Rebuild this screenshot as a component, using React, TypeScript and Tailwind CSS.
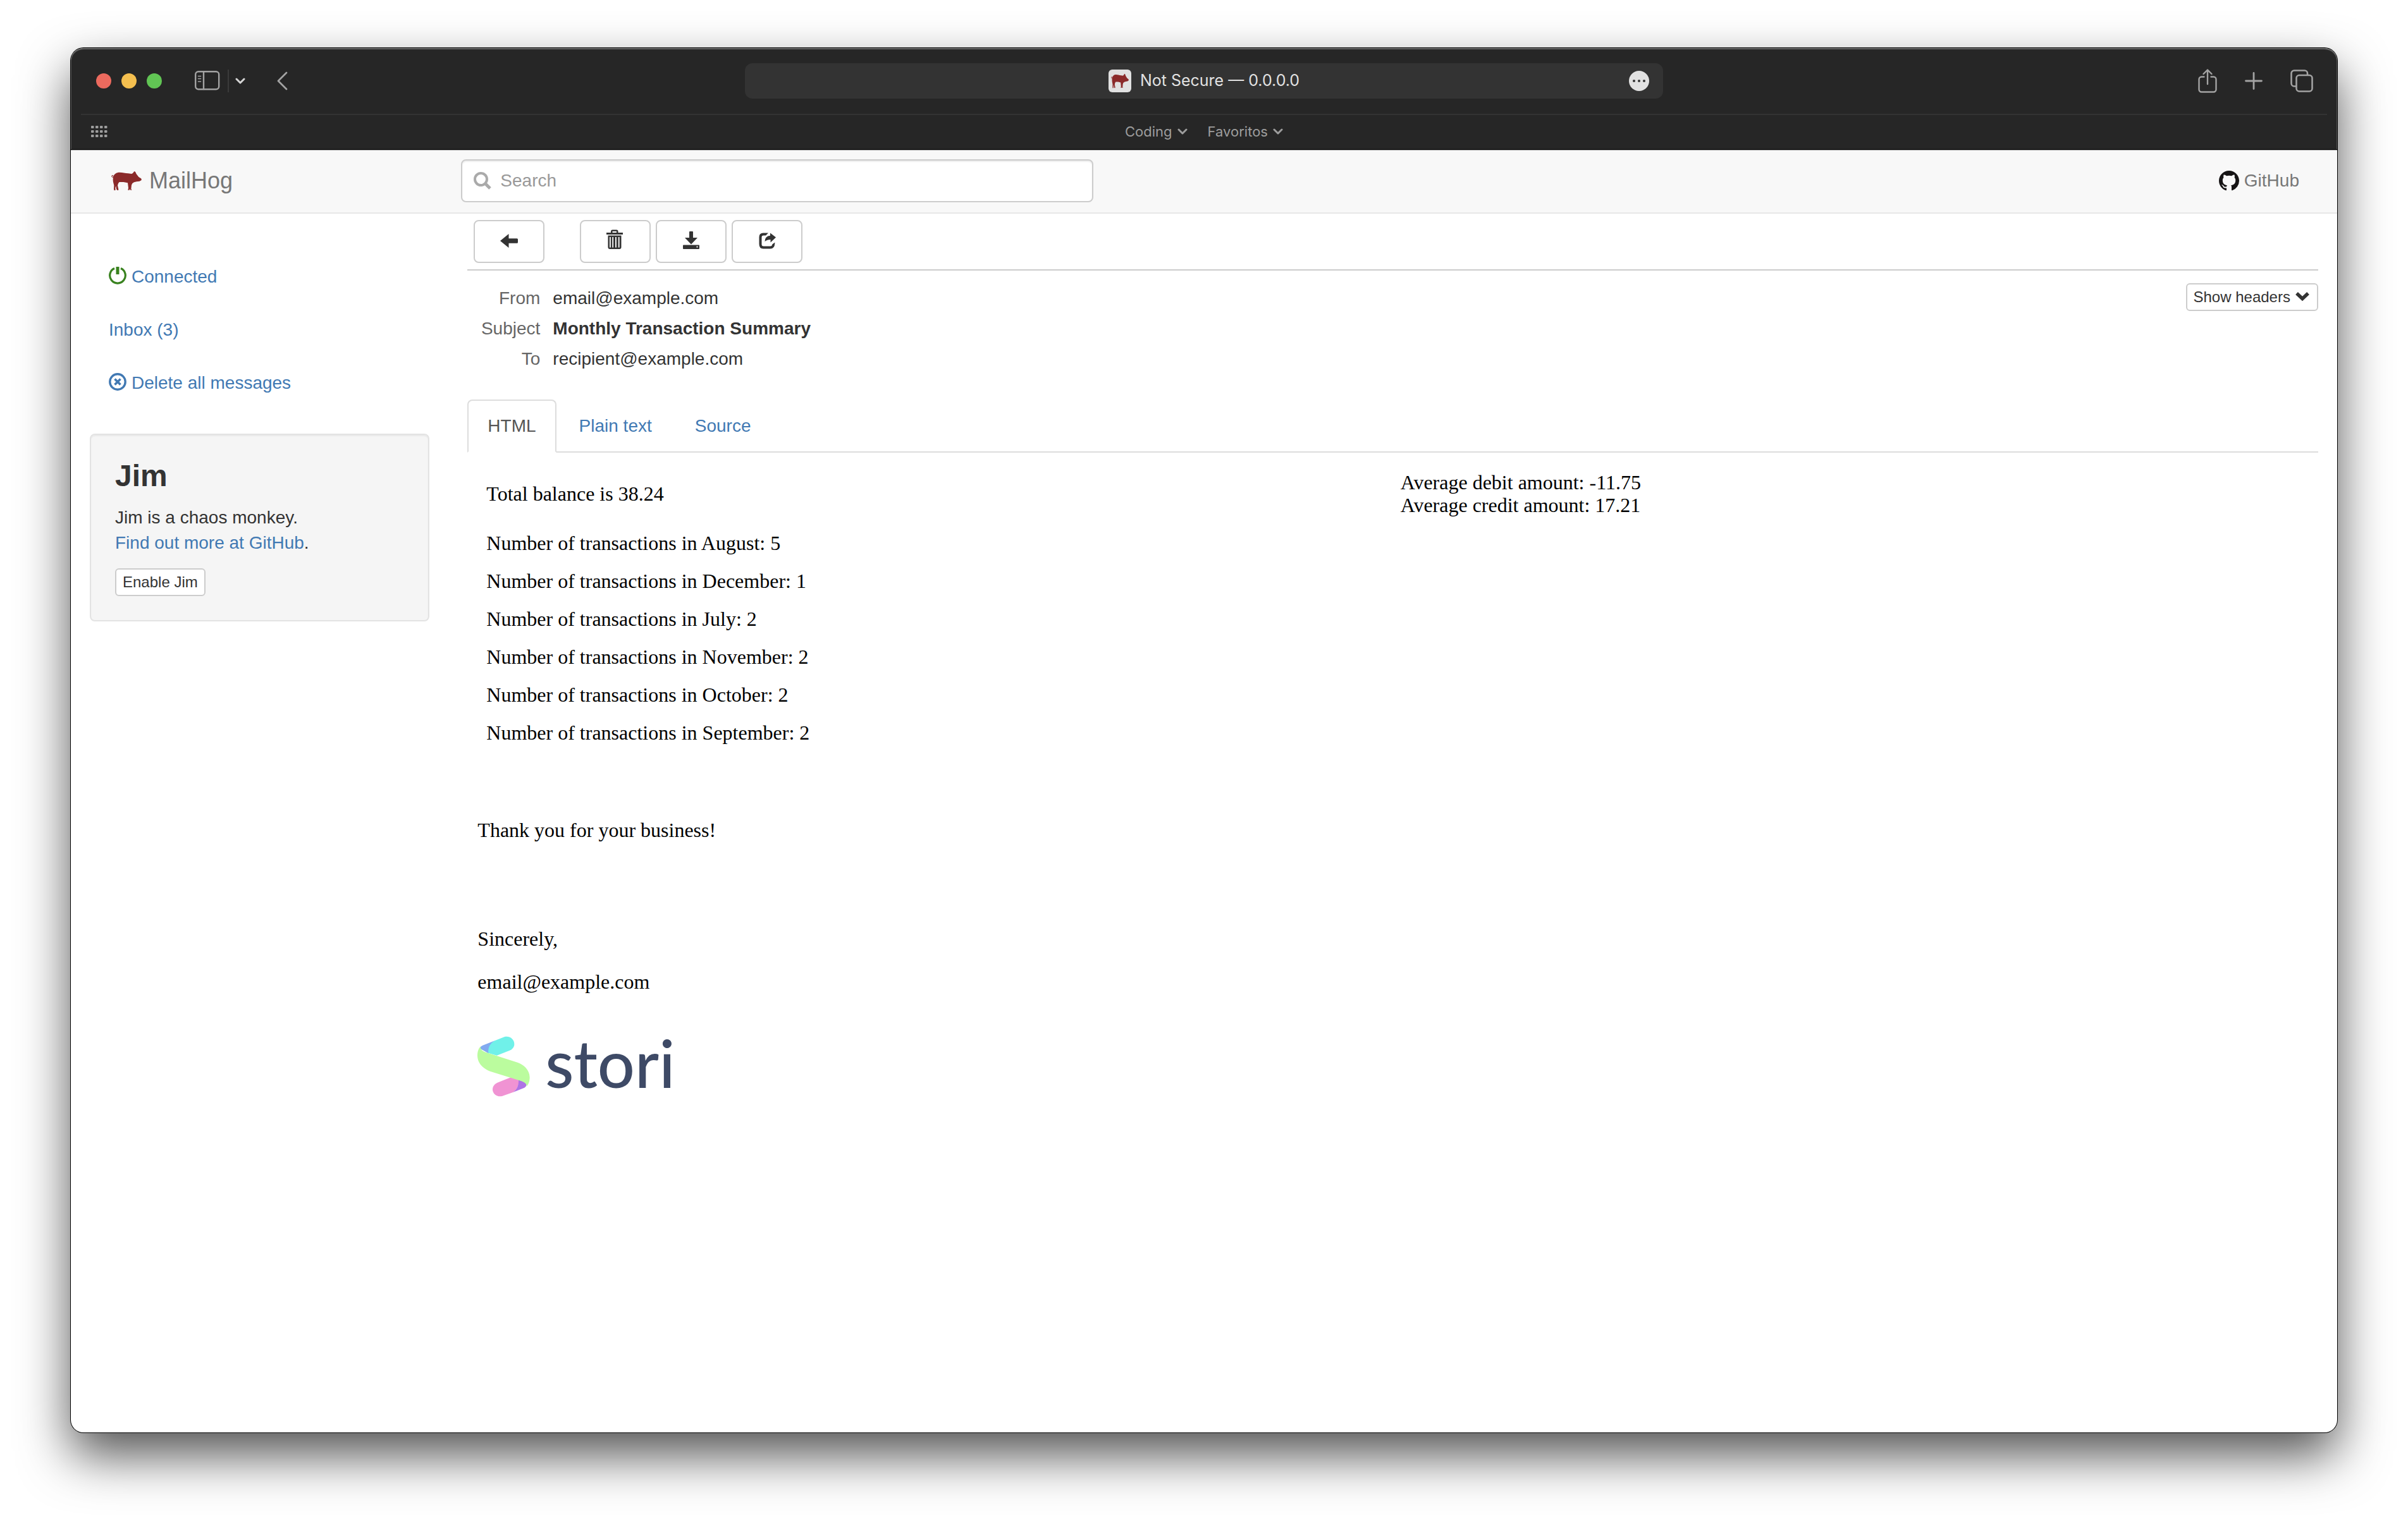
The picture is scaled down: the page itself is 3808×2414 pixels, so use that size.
import type { ReactNode } from "react";

const months = [
  ["August", 5],
  ["December", 1],
  ["July", 2],
  ["November", 2],
  ["October", 2],
  ["September", 2],
] as const;

function Pig({ className }: { className: string }) {
  return (
    <svg viewBox="18 30 144 96" preserveAspectRatio="none" className={className} fill="#8b2a2a" aria-hidden="true">
      <path d="M27 60C30 46 42 38 58 38C72 38 84 42 98 43L114 45L120 42L127 33L132 35L137 46L148 60L159 67Q163 71 160 76L152 80L138 82L126 85Q116 89 114 98L112 116L115 122L109 122L106 117L104 122H97L99 112L96 88L76 84H56Q49 90 48 100L52 118V122L46 123L42 117L40 102L37 112L38 122L32 124L30 118L31 100L27 84Q25 72 27 60Z" />
      <path d="M29 61C24 63 19 60 20 55C21 51 27 51 27 55C27 57 24 58 23 56" fill="none" stroke="#8b2a2a" strokeWidth="3" />
    </svg>
  );
}

function GitHubMark() {
  return (
    <svg viewBox="0 0 16 16" className="size-8" fill="#161415" aria-hidden="true">
      <path d="M8 0C3.58 0 0 3.58 0 8c0 3.54 2.29 6.53 5.47 7.59.4.07.55-.17.55-.38 0-.19-.01-.82-.01-1.49-2.01.37-2.53-.49-2.69-.94-.09-.23-.48-.94-.82-1.13-.28-.15-.68-.52-.01-.53.63-.01 1.08.58 1.23.82.72 1.21 1.87.87 2.33.66.07-.52.28-.87.51-1.07-1.78-.2-3.64-.89-3.64-3.95 0-.87.31-1.59.82-2.15-.08-.2-.36-1.02.08-2.12 0 0 .67-.21 2.2.82.64-.18 1.32-.27 2-.27s1.36.09 2 .27c1.53-1.04 2.2-.82 2.2-.82.44 1.1.16 1.92.08 2.12.51.56.82 1.27.82 2.15 0 3.07-1.87 3.75-3.65 3.95.29.25.54.73.54 1.48 0 1.07-.01 1.93-.01 2.2 0 .21.15.46.55.38A8.01 8.01 0 0 0 16 8c0-4.42-3.58-8-8-8Z" />
    </svg>
  );
}

function SmallChevron({ className }: { className: string }) {
  return (
    <svg viewBox="0 0 16 10" className={className} fill="none" stroke="currentColor" strokeWidth="3" strokeLinecap="round" strokeLinejoin="round" aria-hidden="true">
      <path d="M2 2l6 6 6-6" />
    </svg>
  );
}

function TitleBar() {
  return (
    <div className="grid h-26 grid-cols-[1fr_40.5%_1fr] items-center">
      <div className="flex items-center pl-10 text-[#a3a3a3]">
        <div className="flex gap-4">
          <button aria-label="Close" className="size-6 rounded-full bg-[#ec6a5e]" />
          <button aria-label="Minimize" className="size-6 rounded-full bg-[#f4bf4f]" />
          <button aria-label="Zoom" className="size-6 rounded-full bg-[#61c554]" />
        </div>
        <button aria-label="Show sidebar" className="ml-13">
          <svg viewBox="0 0 40 32" className="h-8 w-10" fill="none" stroke="currentColor" strokeWidth="2.4" strokeLinecap="round">
            <rect x="1.2" y="1.2" width="37" height="28" rx="4.5" />
            <path d="M14 1.5v27.5" />
            <path d="M5.5 8.5h4M5.5 12.5h4M5.5 17h4" strokeWidth="1.6" />
          </svg>
        </button>
        <span className="ml-3 h-9 w-0.5 bg-[#3a3a3a]" />
        <button aria-label="Tab groups" className="ml-2.5 text-[#d6d6d6]">
          <SmallChevron className="h-2.5 w-4" />
        </button>
        <button aria-label="Back" className="ml-12">
          <svg viewBox="0 0 20 32" className="h-8 w-5" fill="none" stroke="currentColor" strokeWidth="2.8" strokeLinecap="round" strokeLinejoin="round">
            <path d="M17 3L4 16l13 13" />
          </svg>
        </button>
      </div>
      <div className="grid h-14 grid-cols-[1fr_auto_1fr] items-center rounded-xl bg-[#333333]">
        <span />
        <div className="flex items-center gap-3.5 font-[Inter,sans-serif] text-[25px] text-[#e2e2e2]">
          <span className="flex size-9 items-center justify-center rounded-md bg-[#e1e1e1]">
            <Pig className="h-6 w-7" />
          </span>
          <span>Not Secure — 0.0.0.0</span>
        </div>
        <button aria-label="Page menu" className="mr-5.5 flex size-8 items-center justify-center gap-1 justify-self-end rounded-full bg-[#e2e2e2]">
          <span className="size-1 rounded-full bg-[#333333]" />
          <span className="size-1 rounded-full bg-[#333333]" />
          <span className="size-1 rounded-full bg-[#333333]" />
        </button>
      </div>
      <div className="flex items-center justify-end gap-11 pr-9.5 text-[#a3a3a3]">
        <button aria-label="Share">
          <svg viewBox="0 0 30 38" className="h-9.5 w-7.5" fill="none" stroke="currentColor" strokeWidth="2.4" strokeLinecap="round" strokeLinejoin="round">
            <path d="M9.5 12.5H5.5a4 4 0 0 0-4 4v16a4 4 0 0 0 4 4h19a4 4 0 0 0 4-4v-16a4 4 0 0 0-4-4h-4M15 24V2M8.5 8L15 1.5 21.500 8" />
          </svg>
        </button>
        <button aria-label="New tab">
          <svg viewBox="0 0 28 28" className="size-7" fill="none" stroke="currentColor" strokeWidth="2.8" strokeLinecap="round">
            <path d="M14 1.500v25M1.500 14h25" />
          </svg>
        </button>
        <button aria-label="Show all tabs">
          <svg viewBox="0 0 36 36" className="size-9" fill="none" stroke="currentColor" strokeWidth="2.6">
            <rect x="9.500" y="9" width="25" height="25.500" rx="4.500" />
            <path d="M9 26.500H6a4.500 4.500 0 0 1-4.500-4.500V6A4.500 4.500 0 0 1 6 1.500h16.500A4.500 4.500 0 0 1 27 6v2.500" />
          </svg>
        </button>
      </div>
    </div>
  );
}

function BookmarksBar() {
  return (
    <div className="grid h-13.5 grid-cols-[1fr_auto_1fr] items-center pb-0.5 text-[22px] text-[#9d9d9d]">
      <button aria-label="Favorites grid" className="ml-8 justify-self-start">
        <svg viewBox="0 0 26 18" className="h-4.5 w-6.5" fill="currentColor">
          {[0, 7, 14].map((y) =>
            [0, 7, 14, 21].map((x) => <rect key={`${x}-${y}`} x={x} y={y} width="4.500" height="4" rx="1" />),
          )}
        </svg>
      </button>
      <div className="flex gap-8 font-[Inter,sans-serif]">
        {["Coding", "Favoritos"].map((name) => (
          <button key={name} className="flex items-center gap-2">
            {name}
            <SmallChevron className="h-2.5 w-4" />
          </button>
        ))}
      </div>
      <span />
    </div>
  );
}

function Navbar() {
  return (
    <header className="flex h-25.25 items-center border-t border-b-2 border-t-[#a8a8a8] border-b-[#e7e7e7] bg-[#f8f8f8] pb-0.5 text-[#777777]">
      <div className="w-1/6 shrink-0 pl-16">
        <a href="#" className="flex items-center gap-3 text-4xl">
          <Pig className="h-8 w-12" />
          MailHog
        </a>
      </div>
      <label className="ml-5 flex h-17 w-[27.9%] items-center gap-3.5 rounded-lg border-2 border-[#cccccc] bg-white pl-4.5 shadow-[inset_0_2px_2px_rgba(0,0,0,0.075)]">
        <svg viewBox="0 0 28 28" className="size-7 shrink-0" fill="none" stroke="#aaaaaa" aria-hidden="true">
          <circle cx="11.500" cy="11.500" r="9.500" strokeWidth="4" />
          <path d="M18.500 18.500L26 26" strokeWidth="5" />
        </svg>
        <input aria-label="Search" placeholder="Search" className="w-full bg-transparent text-[28px] outline-none placeholder:text-[#999999]" />
      </label>
      <a href="#" className="mr-15 ml-auto flex items-center gap-2 text-[28px]">
        <GitHubMark />
        GitHub
      </a>
    </header>
  );
}

function Sidebar() {
  return (
    <aside className="w-1/6 shrink-0 px-7.5 pt-15 leading-10">
      <nav className="flex flex-col gap-1 text-[#4179b3]">
        <a href="#" className="flex items-center gap-2 px-7.5 py-5">
          <svg viewBox="0 0 28 32" className="h-8 w-7" fill="none" stroke="#39821f" aria-hidden="true">
            <path d="M9 2.500A12.300 12.300 0 1 0 19 2.500" strokeWidth="3.200" />
            <path d="M14 0v12" strokeWidth="5" />
          </svg>
          Connected
        </a>
        <a href="#" className="px-7.5 py-5">
          Inbox (3)
        </a>
        <a href="#" className="flex items-center gap-2 px-7.5 py-5">
          <svg viewBox="0 0 28 32" className="h-8 w-7" fill="none" stroke="currentColor" aria-hidden="true">
            <circle cx="14" cy="14" r="12.200" strokeWidth="3.400" />
            <path d="M9.500 9.500l9 9M18.500 9.500l-9 9" strokeWidth="3.600" />
          </svg>
          Delete all messages
        </a>
      </nav>
      <section className="mt-10 rounded-lg border-2 border-[#e3e3e3] bg-[#f5f5f5] p-9.5 shadow-[inset_0_2px_2px_rgba(0,0,0,0.05)]">
        <h3 className="mb-5 text-5xl leading-[53px] font-bold">Jim</h3>
        <p>Jim is a chaos monkey.</p>
        <p>
          <a href="#" className="text-[#4179b3]">
            Find out more at GitHub
          </a>
          .
        </p>
        <button className="mt-5 block rounded-md border-2 border-[#cccccc] bg-white px-2.5 text-2xl leading-10">
          Enable Jim
        </button>
      </section>
    </aside>
  );
}

function ToolButton({ label, children, className = "" }: { label: string; children: ReactNode; className?: string }) {
  return (
    <button aria-label={label} className={`flex h-17 w-28 items-center justify-center rounded-lg border-2 border-[#cccccc] bg-white pb-1.5 ${className}`}>
      <svg viewBox="0 0 28 32" className="h-8 w-7" fill="currentColor">
        {children}
      </svg>
    </button>
  );
}

function Toolbar() {
  return (
    <div className="flex gap-2 border-b-2 border-[#cccccc] p-2.5">
      <ToolButton label="Back to inbox" className="mr-12">
        <path d="M0 18L13.500 7V14.200H26.500Q28 14.200 28 15.700V20.300Q28 21.800 26.500 21.800H13.500V29Z" />
      </ToolButton>
      <ToolButton label="Delete">
        <path d="M7 5V3Q7 .5 9.500 .5H16Q18.500 .5 18.500 3V5H26V8H0V5ZM9.500 5H16V3H9.500Z" fillRule="evenodd" />
        <path d="M2.500 9.500H23.500V28Q23.500 31 20.500 31H5.500Q2.500 31 2.500 28ZM5 12V28.500H6.800V12ZM9.300 12V28.500H11V12ZM14 12V28.500H15.800V12ZM18.800 12V28.500H20.600V12Z" fillRule="evenodd" />
      </ToolButton>
      <ToolButton label="Download">
        <path d="M11 4Q11 3 12 3H16Q17 3 17 4V13H24L14 23.500 4 13H11Z" />
        <path d="M1 25.500Q1 24.500 2 24.500H26Q27 24.500 27 25.500V30Q27 31 26 31H2Q1 31 1 30ZM22.500 26.500V28.500H24.500V26.500Z" fillRule="evenodd" />
      </ToolButton>
      <ToolButton label="Release">
        <path d="M16 5.500H8Q1.500 5.500 1.500 12V23Q1.500 30.500 8 30.500H19Q26 30.500 26.300 22V20.500L22.300 23.500Q22 26.500 19 26.500H8.500Q5.500 26.500 5.500 23.500V12.500Q5.500 9.500 8.500 9.500H12Z" />
        <path d="M19 5.500L28 12.500 19.500 20.500V16Q14 16 10.500 19Q10.500 10.500 19 9.800Z" />
      </ToolButton>
    </div>
  );
}

function MessageHeader() {
  const rows = [
    ["From", "email@example.com"],
    ["Subject", "Monthly Transaction Summary"],
    ["To", "recipient@example.com"],
  ];
  return (
    <div className="flex items-start justify-between pt-5 pb-9">
      <table className="mt-1 leading-10">
        <tbody>
          {rows.map(([name, value]) => (
            <tr key={name} className="h-12 align-top">
              <th scope="row" className="w-[115px] text-right font-normal text-[#666666]">
                {name}
              </th>
              <td className={name === "Subject" ? "pl-5 font-bold" : "pl-5"}>{value}</td>
            </tr>
          ))}
        </tbody>
      </table>
      <button className="flex h-11 items-center gap-2 rounded-md border-2 border-[#cccccc] bg-white pr-3 pl-2.5 text-2xl">
        Show headers
        <svg viewBox="0 0 22 20" className="h-5 w-5.5" fill="none" stroke="currentColor" strokeWidth="5.500" aria-hidden="true">
          <path d="M2 4l9 8.500L20 4" />
        </svg>
      </button>
    </div>
  );
}

function Tabs() {
  return (
    <div role="tablist" className="flex gap-1 border-b-2 border-[#dddddd] leading-10">
      <button role="tab" aria-selected="true" className="-mb-0.5 rounded-t-lg border-2 border-[#dddddd] border-b-white bg-white px-7.5 py-5 text-[#555555]">
        HTML
      </button>
      <button role="tab" aria-selected="false" className="border-t-2 border-transparent px-8 py-5 text-[#4179b3]">
        Plain text
      </button>
      <button role="tab" aria-selected="false" className="border-t-2 border-transparent px-8 py-5 text-[#4179b3]">
        Source
      </button>
    </div>
  );
}

function StoriLogo() {
  return (
    <div className="mt-17 flex items-center gap-6">
      <svg viewBox="105 1108 249 288" className="h-24 w-[83px]" aria-hidden="true">
        <path d="M187 1130L235 1111C255 1106 280 1120 280 1146C280 1160 270 1171 258 1176L197 1200L155 1188C150 1165 165 1140 187 1130Z" fill="#70f1e9" />
        <path d="M187 1130L130 1152Q116 1158 119 1168L157 1190C154 1165 165 1142 187 1130Z" fill="#82aaf0" />
        <path d="M263 1304L205 1327C185 1335 177 1347 177 1362C178 1382 197 1398 222 1393L275 1374C292 1362 304 1340 300 1315Z" fill="#f093d3" />
        <path d="M300 1315L335 1328Q343 1345 328 1353L275 1374C292 1362 302 1342 300 1315Z" fill="#ae73e5" />
        <path d="M120 1157C108 1170 105 1185 105 1202C106 1240 135 1264 165 1275L300 1317C322 1323 342 1333 338 1347C350 1335 353 1318 353 1303C352 1268 325 1243 295 1233L150 1187C130 1180 117 1172 120 1157Z" fill="#bbfc9e" />
      </svg>
      <span className="pb-3 font-[Lato,sans-serif] text-[104px] leading-21 font-medium text-[#3e4a66]">stori</span>
    </div>
  );
}

function EmailBody() {
  return (
    <article className="px-4 pt-[15px] font-['Liberation_Serif',serif] text-[32px] leading-9 text-black">
      <table className="w-full table-fixed border-separate border-spacing-1">
        <tbody>
          <tr>
            <td className="p-2.5 align-middle">Total balance is 38.24</td>
            <td className="p-2.5">
              Average debit amount: -11.75
              <br />
              Average credit amount: 17.21
            </td>
          </tr>
          {months.map(([month, count]) => (
            <tr key={month}>
              <td className="p-2.5">
                Number of transactions in {month}: {count}
              </td>
            </tr>
          ))}
        </tbody>
      </table>
      <p className="mt-26">Thank you for your business!</p>
      <p className="mt-34">Sincerely,</p>
      <p className="mt-8">email@example.com</p>
      <StoriLogo />
    </article>
  );
}

export default function App() {
  return (
    <div className="flex min-h-screen flex-col bg-white px-28 pt-19 pb-37">
      <div className="flex grow flex-col overflow-hidden rounded-[20px] bg-white font-['Liberation_Sans',sans-serif] text-[28px] text-[#333333] shadow-[0_0_0_1px_#000000,0_36px_80px_rgba(0,0,0,0.68)]">
        <div className="rounded-t-[20px] border-b border-black bg-[#262626] shadow-[inset_0_2px_1px_#6c6c6c,inset_1px_0_0_#555555,inset_-1px_0_0_#555555]">
          <TitleBar />
          <div className="mx-4 h-0.5 bg-[#333333]" />
          <BookmarksBar />
        </div>
        <Navbar />
        <div className="flex">
          <Sidebar />
          <main className="min-w-0 grow px-7.5">
            <Toolbar />
            <MessageHeader />
            <Tabs />
            <EmailBody />
          </main>
        </div>
      </div>
    </div>
  );
}
